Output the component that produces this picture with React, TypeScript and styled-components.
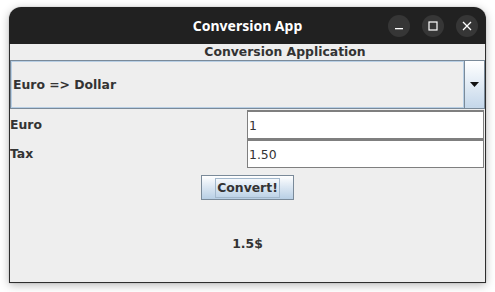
import React from 'react'
import styled, { createGlobalStyle } from 'styled-components'

const GlobalStyle = createGlobalStyle`
  html, body {
    margin: 0;
    padding: 0;
    background: #ffffff;
  }
  body {
    width: 495px;
    height: 292px;
    overflow: hidden;
  }
`

const Desktop = styled.div`
  padding: 7px 0 0 9px;
`

const Window = styled.div`
  width: 477px;
  height: 276px;
  display: flex;
  flex-direction: column;
  border-radius: 12px 12px 0 0;
  box-shadow: 0 2px 10px rgba(0, 0, 0, 0.28), 0 0 1px rgba(0, 0, 0, 0.4);
  box-sizing: border-box;
`

const TitleBar = styled.div`
  height: 37px;
  flex: none;
  background: #212121;
  border-radius: 12px 12px 0 0;
  display: flex;
  align-items: center;
  justify-content: center;
  position: relative;
  color: #ffffff;
  font-family: 'Noto Sans', 'DejaVu Sans', sans-serif;
  font-weight: 700;
  font-size: 14px;
`

const Controls = styled.div`
  position: absolute;
  right: 8px;
  top: 8px;
  display: flex;
  gap: 12px;
`

const CircleButton = styled.div`
  width: 22px;
  height: 22px;
  border-radius: 50%;
  background: #363636;
  display: flex;
  align-items: center;
  justify-content: center;
`

const Content = styled.div`
  flex: 1;
  background: #eeeeee;
  border: 1px solid #2e2e2e;
  border-top: none;
  display: flex;
  flex-direction: column;
  font-family: 'DejaVu Sans', 'Liberation Sans', sans-serif;
  font-size: 12.4px;
  color: #333333;
`

const Heading = styled.div`
  height: 16px;
  line-height: 16px;
  padding-left: 75px;
  text-align: center;
  font-weight: 700;
`

const Combo = styled.div`
  height: 49px;
  display: flex;
  border: 1px solid #7a8a99;
  box-sizing: border-box;
`

const ComboValue = styled.div`
  flex: 1;
  display: flex;
  align-items: center;
  padding-left: 1px;
  border: 1px solid #b8cfe5;
  font-weight: 700;
`

const ComboArrow = styled.div`
  width: 19px;
  border-left: 1px solid #7a8a99;
  background: linear-gradient(#ffffff, #c4d7ea);
  display: flex;
  align-items: center;
  justify-content: center;
`

const Form = styled.div`
  display: grid;
  grid-template-columns: 237px 237px;
  grid-auto-rows: 29px;
  margin-top: 1px;
`

const FieldLabel = styled.div`
  display: flex;
  align-items: center;
  font-weight: 700;
`

const Field = styled.div`
  border: 1px solid #7f7f7f;
  border-top-width: 2px;
  background: #ffffff;
  display: flex;
  align-items: center;
  padding-left: 1px;
  color: #333333;
`

const ButtonRow = styled.div`
  display: flex;
  justify-content: center;
  padding-top: 7px;
`

const Button = styled.div`
  width: 93px;
  height: 25px;
  box-sizing: border-box;
  border: 1px solid #7a8a99;
  background: linear-gradient(#ffffff, #dde8f3 45%, #b8cfe5);
  display: flex;
  align-items: center;
  justify-content: center;
  font-weight: 700;
`

const Focus = styled.span`
  border: 1px solid #a3b8cc;
  padding: 0 1px;
  line-height: 18px;
`

const Result = styled.div`
  flex: 1;
  display: flex;
  justify-content: center;
  padding-top: 36px;
  font-weight: 700;
`

export default function App() {
  return (
    <>
      <GlobalStyle />
      <Desktop>
        <Window>
          <TitleBar>
            Conversion App
            <Controls>
              <CircleButton>
                <svg width="10" height="10" viewBox="0 0 10 10">
                  <rect x="1" y="7" width="8" height="1.3" fill="#fff" />
                </svg>
              </CircleButton>
              <CircleButton>
                <svg width="10" height="10" viewBox="0 0 10 10">
                  <rect x="1" y="1" width="8" height="8" fill="none" stroke="#fff" strokeWidth="1.2" />
                </svg>
              </CircleButton>
              <CircleButton>
                <svg width="10" height="10" viewBox="0 0 10 10">
                  <path d="M1 1 L9 9 M9 1 L1 9" stroke="#fff" strokeWidth="1.3" />
                </svg>
              </CircleButton>
            </Controls>
          </TitleBar>
          <Content>
            <Heading>Conversion Application</Heading>
            <Combo>
              <ComboValue>Euro =&gt; Dollar</ComboValue>
              <ComboArrow>
                <svg width="10" height="6" viewBox="0 0 10 6">
                  <path d="M0 0 H9 L4.5 5 Z" fill="#111" />
                </svg>
              </ComboArrow>
            </Combo>
            <Form>
              <FieldLabel>Euro</FieldLabel>
              <Field>1</Field>
              <FieldLabel>Tax</FieldLabel>
              <Field>1.50</Field>
            </Form>
            <ButtonRow>
              <Button>
                <Focus>Convert!</Focus>
              </Button>
            </ButtonRow>
            <Result>1.5$</Result>
          </Content>
        </Window>
      </Desktop>
    </>
  )
}
